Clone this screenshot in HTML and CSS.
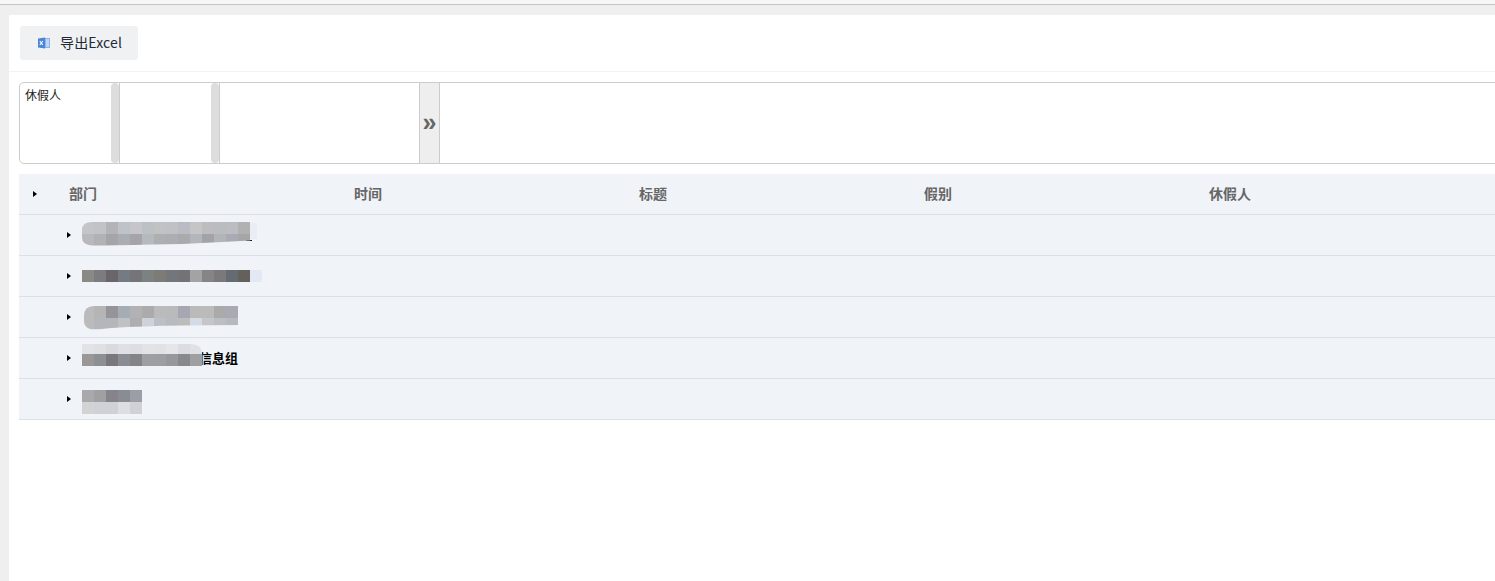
FILE: index.html
```html
<!DOCTYPE html>
<html lang="zh-CN">
<head>
<meta charset="utf-8">
<title>休假统计</title>
<link rel="stylesheet" href="styles.css">
</head>
<body>
<div class="topline"></div>
<main class="panel">
  <div class="toolbar">
    <button class="export-btn" type="button">
      <svg class="xls-icon" width="12" height="12" viewBox="0 0 12 12" aria-hidden="true">
        <path d="M4 1 12 1V11L4 11Z" fill="#8db4e8"/>
        <path d="M0 1.6 7 .5V11.5L0 10.4Z" fill="#4a86d8"/>
        <path d="M8 3h3M8 5h3M8 7h3M8 9h3" stroke="#fff" stroke-width=".9"/>
        <path d="M1.8 4 4.8 8M4.8 4 1.8 8" stroke="#fff" stroke-width="1.1"/>
      </svg>
      <span class="export-label">导出Excel</span>
    </button>
  </div>
  <div class="pivot">
    <div class="zone zone-sm"><span class="zone-label">休假人</span><i class="grip"></i></div>
    <div class="zone zone-sm"><i class="grip"></i></div>
    <div class="zone zone-lg"></div>
    <div class="toggle">»</div>
  </div>
  <div class="table">
    <div class="thead">
      <div class="th-arrow"><i class="tri"></i></div>
      <div>部门</div><div>时间</div><div>标题</div><div>假别</div><div>休假人</div>
    </div>
    <div class="group"><i class="tri"></i>
      <svg class="mosaic" width="200" height="40" shape-rendering="crispEdges" aria-hidden="true">
        <defs><clipPath id="c1"><path d="M0 15Q0 7 10 7H168V25.5L150 26.5Q110 29 70 29.5Q30 30.5 10 30.5Q0 30 0 22Z"/></clipPath></defs>
        <rect x="168" y="8" width="7" height="16" fill="#e9edf6"/>
        <rect x="164" y="25" width="6" height="1" fill="#222"/>
        <g clip-path="url(#c1)">
          <rect x="0" y="7" width="12" height="12" fill="#c4c5c9"/><rect x="12" y="7" width="12" height="12" fill="#c2c3c7"/><rect x="24" y="7" width="12" height="12" fill="#b4b3b6"/><rect x="36" y="7" width="12" height="12" fill="#bfc3c9"/><rect x="48" y="7" width="12" height="12" fill="#c5c6cb"/><rect x="60" y="7" width="12" height="12" fill="#bcc1c4"/><rect x="72" y="7" width="12" height="12" fill="#c1c2c4"/><rect x="84" y="7" width="12" height="12" fill="#c0c1c4"/><rect x="96" y="7" width="12" height="12" fill="#b9bcc4"/><rect x="108" y="7" width="12" height="12" fill="#c5c4c6"/><rect x="120" y="7" width="12" height="12" fill="#bdbdc0"/><rect x="132" y="7" width="12" height="12" fill="#babcbf"/><rect x="144" y="7" width="12" height="12" fill="#babdc1"/><rect x="156" y="7" width="12" height="12" fill="#b2b1b1"/>
          <rect x="0" y="19" width="12" height="12" fill="#b9b9bb"/><rect x="12" y="19" width="12" height="12" fill="#b1b2b6"/><rect x="24" y="19" width="12" height="12" fill="#a5a5a7"/><rect x="36" y="19" width="12" height="12" fill="#aaaeb3"/><rect x="48" y="19" width="12" height="12" fill="#a5a4a8"/><rect x="60" y="19" width="12" height="12" fill="#b4babd"/><rect x="72" y="19" width="12" height="12" fill="#aeafb0"/><rect x="84" y="19" width="12" height="12" fill="#abadb1"/><rect x="96" y="19" width="12" height="12" fill="#a9aaac"/><rect x="108" y="19" width="12" height="12" fill="#b3b6ba"/><rect x="120" y="19" width="12" height="12" fill="#a3a3a7"/><rect x="132" y="19" width="12" height="12" fill="#b1b5b7"/><rect x="144" y="19" width="12" height="12" fill="#a8abb3"/><rect x="156" y="19" width="12" height="12" fill="#a7a6a6"/>
        </g>
      </svg>
    </div>
    <div class="group"><i class="tri"></i>
      <svg class="mosaic" width="200" height="40" shape-rendering="crispEdges" aria-hidden="true">
        <rect x="0" y="14" width="12" height="12" fill="#8b8986"/><rect x="12" y="14" width="12" height="12" fill="#7c7c7e"/><rect x="24" y="14" width="12" height="12" fill="#69656a"/><rect x="36" y="14" width="12" height="12" fill="#767a82"/><rect x="48" y="14" width="12" height="12" fill="#757579"/><rect x="60" y="14" width="12" height="12" fill="#7c8282"/><rect x="72" y="14" width="12" height="12" fill="#7d7b78"/><rect x="84" y="14" width="12" height="12" fill="#73767a"/><rect x="96" y="14" width="12" height="12" fill="#737377"/><rect x="108" y="14" width="12" height="12" fill="#a3a3a4"/><rect x="120" y="14" width="12" height="12" fill="#858587"/><rect x="132" y="14" width="12" height="12" fill="#7b797c"/><rect x="144" y="14" width="12" height="12" fill="#666a72"/><rect x="156" y="14" width="12" height="12" fill="#64605c"/><rect x="168" y="14" width="12" height="12" fill="#e3e9f3"/>
      </svg>
    </div>
    <div class="group"><i class="tri"></i>
      <svg class="mosaic" width="200" height="40" shape-rendering="crispEdges" aria-hidden="true">
        <defs><clipPath id="c3"><path d="M2 19Q2 9 12 9H156V28L100 28.5Q60 29 30 31Q12 33 8 32Q2 30 2 24Z"/></clipPath></defs>
        <g clip-path="url(#c3)">
          <rect x="0" y="9" width="12" height="12" fill="#bbbbbb"/><rect x="12" y="9" width="12" height="12" fill="#b5b5b6"/><rect x="24" y="9" width="12" height="12" fill="#959498"/><rect x="36" y="9" width="12" height="12" fill="#a6acb4"/><rect x="48" y="9" width="12" height="12" fill="#b2b2b4"/><rect x="60" y="9" width="12" height="12" fill="#acabac"/><rect x="72" y="9" width="12" height="12" fill="#bbbbbd"/><rect x="84" y="9" width="12" height="12" fill="#b9babc"/><rect x="96" y="9" width="12" height="12" fill="#a5a8b0"/><rect x="108" y="9" width="12" height="12" fill="#bbbabb"/><rect x="120" y="9" width="12" height="12" fill="#bbbbbc"/><rect x="132" y="9" width="12" height="12" fill="#aaaaac"/><rect x="144" y="9" width="12" height="12" fill="#a8abb1"/>
          <rect x="0" y="21" width="12" height="12" fill="#bbbbbb"/><rect x="12" y="21" width="12" height="12" fill="#b3b7bc"/><rect x="24" y="21" width="12" height="12" fill="#b5b6b9"/><rect x="36" y="21" width="12" height="12" fill="#bec2c5"/><rect x="48" y="21" width="12" height="12" fill="#aeadaf"/><rect x="60" y="21" width="12" height="12" fill="#cdd2dc"/><rect x="72" y="21" width="12" height="12" fill="#bbbfc6"/><rect x="84" y="21" width="12" height="12" fill="#b7babe"/><rect x="96" y="21" width="12" height="12" fill="#bbbdbd"/><rect x="108" y="21" width="12" height="12" fill="#d5dbe6"/><rect x="120" y="21" width="12" height="12" fill="#c4c6c9"/><rect x="132" y="21" width="12" height="12" fill="#bcbfc2"/><rect x="144" y="21" width="12" height="12" fill="#b6bac0"/>
        </g>
      </svg>
    </div>
    <div class="group"><i class="tri"></i><span class="group-name">信息组</span>
      <svg class="mosaic" width="200" height="40" shape-rendering="crispEdges" aria-hidden="true">
        <defs><clipPath id="c4"><path d="M0 6H108Q120 6 120 16V28H0Z"/></clipPath></defs>
        <g clip-path="url(#c4)">
          <rect x="0" y="6" width="12" height="10" fill="#e2e3e7"/><rect x="12" y="6" width="12" height="10" fill="#dfe0e4"/><rect x="24" y="6" width="12" height="10" fill="#d9dade"/><rect x="36" y="6" width="12" height="10" fill="#dfe0e5"/><rect x="48" y="6" width="12" height="10" fill="#dddee3"/><rect x="60" y="6" width="12" height="10" fill="#e2e3e7"/><rect x="72" y="6" width="12" height="10" fill="#e1e2e6"/><rect x="84" y="6" width="12" height="10" fill="#e5e6ea"/><rect x="96" y="6" width="12" height="10" fill="#dbdde2"/><rect x="108" y="6" width="12" height="10" fill="#e0e1e5"/>
          <rect x="0" y="16" width="12" height="12" fill="#9a9896"/><rect x="12" y="16" width="12" height="12" fill="#8e8f93"/><rect x="24" y="16" width="12" height="12" fill="#7a787c"/><rect x="36" y="16" width="12" height="12" fill="#8a8d93"/><rect x="48" y="16" width="12" height="12" fill="#848387"/><rect x="60" y="16" width="12" height="12" fill="#9f9fa3"/><rect x="72" y="16" width="12" height="12" fill="#9e9ea2"/><rect x="84" y="16" width="12" height="12" fill="#97989c"/><rect x="96" y="16" width="12" height="12" fill="#88898c"/><rect x="108" y="16" width="12" height="12" fill="#a0a0a2"/>
        </g>
      </svg>
    </div>
    <div class="group"><i class="tri"></i>
      <svg class="mosaic" width="200" height="40" shape-rendering="crispEdges" aria-hidden="true">
        <rect x="0" y="11" width="12" height="12" fill="#a9a9ab"/><rect x="12" y="11" width="12" height="12" fill="#a0a0a2"/><rect x="24" y="11" width="12" height="12" fill="#86848a"/><rect x="36" y="11" width="12" height="12" fill="#8a8c94"/><rect x="48" y="11" width="12" height="12" fill="#9b9ea6"/>
        <rect x="0" y="23" width="12" height="12" fill="#d3d3d6"/><rect x="12" y="23" width="12" height="12" fill="#ced1d8"/><rect x="24" y="23" width="12" height="12" fill="#d0d1d7"/><rect x="36" y="23" width="12" height="12" fill="#dcdee3"/><rect x="48" y="23" width="12" height="12" fill="#cfd1d7"/>
      </svg>
    </div>
  </div>
</main>
</body>
</html>
```

FILE: styles.css
```css
* { box-sizing: border-box; }
html, body { height: 100%; }
body {
  margin: 0;
  display: flex;
  flex-direction: column;
  overflow: hidden;
  background: #efefef;
  font-family: "Noto Sans CJK SC", "Open Sans", sans-serif;
  color: #000;
}
.topline {
  flex: none;
  height: 15px;
  background: #efefef;
  border-top: 4px solid #f7f7f7;
}
.topline::before {
  content: "";
  display: block;
  height: 1px;
  background: #c4c4c4;
}
.panel {
  flex: 1;
  margin-left: 9px;
  background: #fff;
  overflow: hidden;
}
.toolbar {
  height: 57px;
  padding: 11px;
  border-bottom: 1px solid #f3f3f3;
}
.export-btn {
  display: flex;
  align-items: center;
  gap: 10px;
  width: 118px;
  height: 34px;
  padding: 0 0 0 18px;
  border: 0;
  border-radius: 3px;
  background: #f0f1f3;
  font: 14px/20px "Noto Sans CJK SC", "Open Sans", sans-serif;
  color: #1f2a37;
}
.export-label { padding-bottom: 2px; letter-spacing: .15px; }
.xls-icon { flex: none; }
.pivot {
  display: flex;
  width: 1500px;
  height: 82px;
  margin: 10px 0 10px 10px;
  border: 1px solid #ccc;
  border-radius: 5px 0 0 5px;
}
.zone {
  position: relative;
  flex: none;
  padding: 3px 5px;
  font-size: 12px;
  line-height: 18px;
}
.zone-sm {
  width: 100px;
  border-right: 1px solid #ccc;
}
.zone-lg { width: 199px; }
.zone-label { color: #222; }
.grip {
  position: absolute;
  top: 0;
  right: 0;
  bottom: 0;
  width: 8px;
  border-radius: 4px;
  background: #ddd;
}
.toggle {
  flex: none;
  width: 21px;
  background: #eee;
  border-left: 1px solid #ccc;
  border-right: 1px solid #ccc;
  color: #666;
  font: bold 25px/78px "Liberation Sans", sans-serif;
  text-align: center;
}
.table {
  width: 1500px;
  margin-left: 10px;
  background: #f0f3f8;
}
.thead {
  display: grid;
  grid-template-columns: 50px repeat(5, 285px);
  align-items: center;
  height: 41px;
  padding-bottom: 2px;
  border-bottom: 1px solid #dcdfe5;
  font-size: 14px;
  font-weight: 700;
  color: #666;
}
.th-arrow { padding: 2px 0 0 14px; display: flex; }
.tri {
  flex: none;
  width: 0;
  height: 0;
  border-top: 3px solid transparent;
  border-bottom: 3px solid transparent;
  border-left: 4px solid #000;
}
.group {
  position: relative;
  display: flex;
  align-items: center;
  height: 41px;
  padding-left: 48px;
  border-bottom: 1px solid #dcdfe5;
}
.group-name {
  margin-left: 128px;
  padding-bottom: 2px;
  font-size: 13px;
  font-weight: 700;
  color: #000;
}
.mosaic {
  position: absolute;
  top: 0;
  left: 63px;
}
```
